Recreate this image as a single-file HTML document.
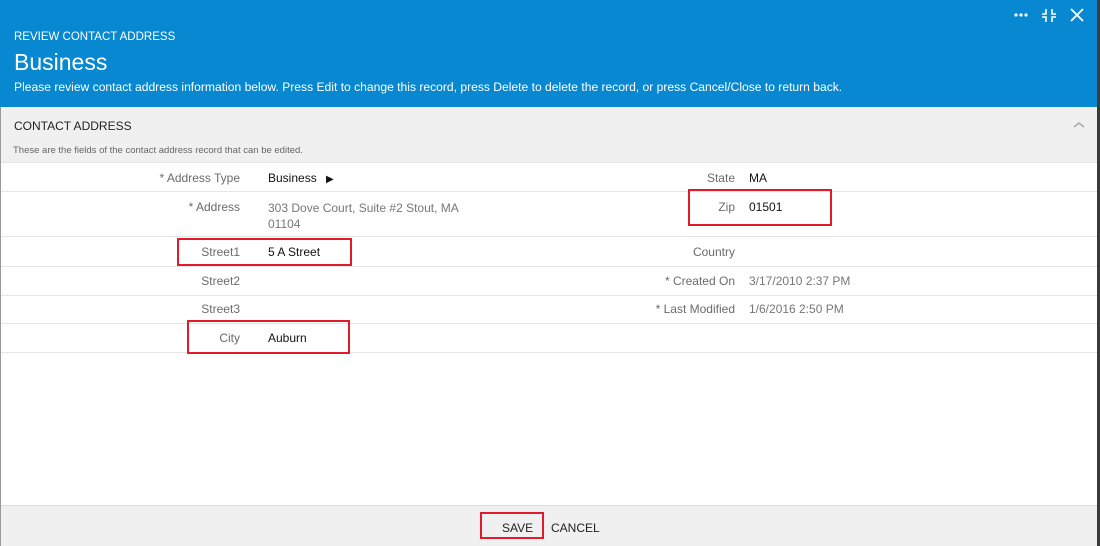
<!DOCTYPE html>
<html><head><meta charset="utf-8"><style>
*{margin:0;padding:0;box-sizing:border-box}
body{width:1100px;height:546px;overflow:hidden;background:#fff;font-family:"Liberation Sans",sans-serif;position:relative}
.a{position:absolute;white-space:nowrap}
.hdr{left:0;top:0;width:1100px;height:107px;background:#0788d0}
.sec{left:0;top:107px;width:1100px;height:55px;background:#f0f0f0}
.line{position:absolute;left:1px;width:1096px;height:1px;background:#e6e6e6}
.lbl{position:absolute;font-size:12px;color:#6b6b6b;text-align:right}
.val{position:absolute;font-size:12px;color:#111}
.gv{color:#777}
.red{position:absolute;border:2px solid #e01b2c}
</style></head><body>
<div class="a hdr"></div>
<div class="a" style="left:14px;top:31px;font-size:11.5px;color:#fff">REVIEW CONTACT ADDRESS</div>
<div class="a" style="left:14px;top:49px;font-size:23px;color:#fff">Business</div>
<div class="a" style="left:14px;top:80px;font-size:12.1px;color:#fff">Please review contact address information below. Press Edit to change this record, press Delete to delete the record, or press Cancel/Close to return back.</div>
<svg class="a" style="left:1012px;top:8px" width="80" height="16" viewBox="0 0 80 16">
<circle cx="4" cy="7" r="1.6" fill="#fff"/><circle cx="9" cy="7" r="1.6" fill="#fff"/><circle cx="14" cy="7" r="1.6" fill="#fff"/>
<path d="M34 1v5h-4M40 1v5h4M34 14v-5h-4M40 14v-5h4" stroke="#fff" stroke-width="1.6" fill="none"/>
<path d="M59 1l12 12M71 1l-12 12" stroke="#fff" stroke-width="1.8"/>
</svg>
<div class="a sec"></div>
<div class="a" style="left:14px;top:119px;font-size:12px;color:#222">CONTACT ADDRESS</div>
<div class="a" style="left:13px;top:145px;font-size:9.5px;color:#666">These are the fields of the contact address record that can be edited.</div>
<svg class="a" style="left:1072px;top:120px" width="14" height="10"><path d="M2 7l5-4 5 4" stroke="#aaa" stroke-width="1.5" fill="none"/></svg>

<div class="line" style="top:162px"></div>
<div class="line" style="top:191px"></div>
<div class="line" style="top:236px"></div>
<div class="line" style="top:266px"></div>
<div class="line" style="top:295px"></div>
<div class="line" style="top:323px"></div>
<div class="line" style="top:352px"></div>

<div class="lbl" style="right:860px;top:171px">* Address Type</div>
<div class="val" style="left:268px;top:171px">Business <span style="font-size:10px;margin-left:6px">&#9654;</span></div>
<div class="lbl" style="right:860px;top:200px">* Address</div>
<div class="val gv" style="left:268px;top:200px;line-height:16px">303 Dove Court, Suite #2 Stout, MA<br>01104</div>
<div class="lbl" style="right:860px;top:245px">Street1</div>
<div class="val" style="left:268px;top:245px">5 A Street</div>
<div class="lbl" style="right:860px;top:274px">Street2</div>
<div class="lbl" style="right:860px;top:302px">Street3</div>
<div class="lbl" style="right:860px;top:331px">City</div>
<div class="val" style="left:268px;top:331px">Auburn</div>

<div class="lbl" style="right:365px;top:171px">State</div>
<div class="val" style="left:749px;top:171px">MA</div>
<div class="lbl" style="right:365px;top:200px">Zip</div>
<div class="val" style="left:749px;top:200px">01501</div>
<div class="lbl" style="right:365px;top:245px">Country</div>
<div class="lbl" style="right:365px;top:274px">* Created On</div>
<div class="val gv" style="left:749px;top:274px">3/17/2010 2:37 PM</div>
<div class="lbl" style="right:365px;top:302px">* Last Modified</div>
<div class="val gv" style="left:749px;top:302px">1/6/2016 2:50 PM</div>

<div class="red" style="left:177px;top:238px;width:175px;height:28px"></div>
<div class="red" style="left:187px;top:320px;width:163px;height:34px"></div>
<div class="red" style="left:688px;top:189px;width:144px;height:37px"></div>

<div class="a" style="left:0;top:505px;width:1100px;height:41px;background:#f0f0f0;border-top:1px solid #dcdcdc"></div>
<div class="a" style="left:502px;top:521px;font-size:12px;color:#222">SAVE</div>
<div class="a" style="left:551px;top:521px;font-size:12px;color:#222">CANCEL</div>
<div class="red" style="left:480px;top:512px;width:64px;height:27px"></div>

<div class="a" style="left:0;top:107px;width:1px;height:439px;background:#999"></div>
<div class="a" style="left:1097px;top:0;width:3px;height:546px;background:#3a3a3a"></div>
</body></html>
